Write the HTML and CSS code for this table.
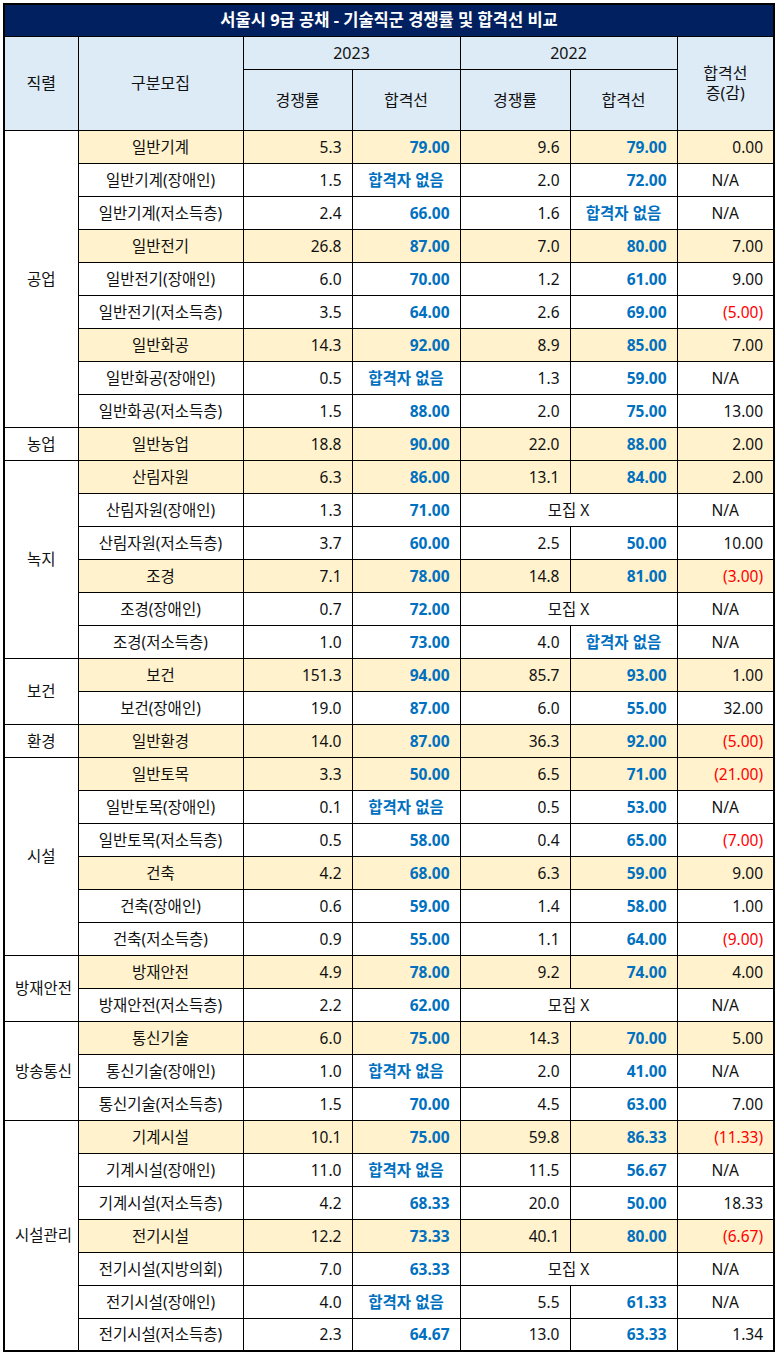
FILE: index.html
```html
<!DOCTYPE html>
<html lang="ko">
<head>
<meta charset="utf-8">
<title>서울시 9급 공채 - 기술직군 경쟁률 및 합격선 비교</title>
<link rel="stylesheet" href="styles.css">
</head>
<body>
<div class="wrap">
<table class="tbl">
<colgroup>
<col class="c1"><col class="c2"><col class="c3"><col class="c4"><col class="c5"><col class="c6"><col class="c7">
</colgroup>
<thead>
<tr class="r-title"><th colspan="7" class="title">서울시 9급 공채 - 기술직군 경쟁률 및 합격선 비교</th></tr>
<tr class="r-h1">
<th rowspan="2" class="hd">직렬</th>
<th rowspan="2" class="hd">구분모집</th>
<th colspan="2" class="hd">2023</th>
<th colspan="2" class="hd">2022</th>
<th rowspan="2" class="hd two">합격선<br>증(감)</th>
</tr>
<tr class="r-h2">
<th class="hd">경쟁률</th><th class="hd">합격선</th><th class="hd">경쟁률</th><th class="hd">합격선</th>
</tr>
</thead>
<tbody>
<tr class="hl"><td rowspan="9" class="grp">공업</td><td class="name">일반기계</td><td class="num">5.3</td><td class="pass">79.00</td><td class="num">9.6</td><td class="pass">79.00</td><td class="num">0.00</td></tr>
<tr><td class="name">일반기계(장애인)</td><td class="num">1.5</td><td class="none">합격자 없음</td><td class="num">2.0</td><td class="pass">72.00</td><td class="na">N/A</td></tr>
<tr><td class="name">일반기계(저소득층)</td><td class="num">2.4</td><td class="pass">66.00</td><td class="num">1.6</td><td class="none">합격자 없음</td><td class="na">N/A</td></tr>
<tr class="hl"><td class="name">일반전기</td><td class="num">26.8</td><td class="pass">87.00</td><td class="num">7.0</td><td class="pass">80.00</td><td class="num">7.00</td></tr>
<tr><td class="name">일반전기(장애인)</td><td class="num">6.0</td><td class="pass">70.00</td><td class="num">1.2</td><td class="pass">61.00</td><td class="num">9.00</td></tr>
<tr><td class="name">일반전기(저소득층)</td><td class="num">3.5</td><td class="pass">64.00</td><td class="num">2.6</td><td class="pass">69.00</td><td class="neg">(5.00)</td></tr>
<tr class="hl"><td class="name">일반화공</td><td class="num">14.3</td><td class="pass">92.00</td><td class="num">8.9</td><td class="pass">85.00</td><td class="num">7.00</td></tr>
<tr><td class="name">일반화공(장애인)</td><td class="num">0.5</td><td class="none">합격자 없음</td><td class="num">1.3</td><td class="pass">59.00</td><td class="na">N/A</td></tr>
<tr><td class="name">일반화공(저소득층)</td><td class="num">1.5</td><td class="pass">88.00</td><td class="num">2.0</td><td class="pass">75.00</td><td class="num">13.00</td></tr>

<tr class="hl"><td class="grp">농업</td><td class="name">일반농업</td><td class="num">18.8</td><td class="pass">90.00</td><td class="num">22.0</td><td class="pass">88.00</td><td class="num">2.00</td></tr>

<tr class="hl"><td rowspan="6" class="grp">녹지</td><td class="name">산림자원</td><td class="num">6.3</td><td class="pass">86.00</td><td class="num">13.1</td><td class="pass">84.00</td><td class="num">2.00</td></tr>
<tr><td class="name">산림자원(장애인)</td><td class="num">1.3</td><td class="pass">71.00</td><td colspan="2" class="mx">모집 X</td><td class="na">N/A</td></tr>
<tr><td class="name">산림자원(저소득층)</td><td class="num">3.7</td><td class="pass">60.00</td><td class="num">2.5</td><td class="pass">50.00</td><td class="num">10.00</td></tr>
<tr class="hl"><td class="name">조경</td><td class="num">7.1</td><td class="pass">78.00</td><td class="num">14.8</td><td class="pass">81.00</td><td class="neg">(3.00)</td></tr>
<tr><td class="name">조경(장애인)</td><td class="num">0.7</td><td class="pass">72.00</td><td colspan="2" class="mx">모집 X</td><td class="na">N/A</td></tr>
<tr><td class="name">조경(저소득층)</td><td class="num">1.0</td><td class="pass">73.00</td><td class="num">4.0</td><td class="none">합격자 없음</td><td class="na">N/A</td></tr>

<tr class="hl"><td rowspan="2" class="grp">보건</td><td class="name">보건</td><td class="num">151.3</td><td class="pass">94.00</td><td class="num">85.7</td><td class="pass">93.00</td><td class="num">1.00</td></tr>
<tr><td class="name">보건(장애인)</td><td class="num">19.0</td><td class="pass">87.00</td><td class="num">6.0</td><td class="pass">55.00</td><td class="num">32.00</td></tr>

<tr class="hl"><td class="grp">환경</td><td class="name">일반환경</td><td class="num">14.0</td><td class="pass">87.00</td><td class="num">36.3</td><td class="pass">92.00</td><td class="neg">(5.00)</td></tr>

<tr class="hl"><td rowspan="6" class="grp">시설</td><td class="name">일반토목</td><td class="num">3.3</td><td class="pass">50.00</td><td class="num">6.5</td><td class="pass">71.00</td><td class="neg">(21.00)</td></tr>
<tr><td class="name">일반토목(장애인)</td><td class="num">0.1</td><td class="none">합격자 없음</td><td class="num">0.5</td><td class="pass">53.00</td><td class="na">N/A</td></tr>
<tr><td class="name">일반토목(저소득층)</td><td class="num">0.5</td><td class="pass">58.00</td><td class="num">0.4</td><td class="pass">65.00</td><td class="neg">(7.00)</td></tr>
<tr class="hl"><td class="name">건축</td><td class="num">4.2</td><td class="pass">68.00</td><td class="num">6.3</td><td class="pass">59.00</td><td class="num">9.00</td></tr>
<tr><td class="name">건축(장애인)</td><td class="num">0.6</td><td class="pass">59.00</td><td class="num">1.4</td><td class="pass">58.00</td><td class="num">1.00</td></tr>
<tr><td class="name">건축(저소득층)</td><td class="num">0.9</td><td class="pass">55.00</td><td class="num">1.1</td><td class="pass">64.00</td><td class="neg">(9.00)</td></tr>

<tr class="hl"><td rowspan="2" class="grp">방재안전</td><td class="name">방재안전</td><td class="num">4.9</td><td class="pass">78.00</td><td class="num">9.2</td><td class="pass">74.00</td><td class="num">4.00</td></tr>
<tr><td class="name">방재안전(저소득층)</td><td class="num">2.2</td><td class="pass">62.00</td><td colspan="2" class="mx">모집 X</td><td class="na">N/A</td></tr>

<tr class="hl"><td rowspan="3" class="grp">방송통신</td><td class="name">통신기술</td><td class="num">6.0</td><td class="pass">75.00</td><td class="num">14.3</td><td class="pass">70.00</td><td class="num">5.00</td></tr>
<tr><td class="name">통신기술(장애인)</td><td class="num">1.0</td><td class="none">합격자 없음</td><td class="num">2.0</td><td class="pass">41.00</td><td class="na">N/A</td></tr>
<tr><td class="name">통신기술(저소득층)</td><td class="num">1.5</td><td class="pass">70.00</td><td class="num">4.5</td><td class="pass">63.00</td><td class="num">7.00</td></tr>

<tr class="hl"><td rowspan="7" class="grp">시설관리</td><td class="name">기계시설</td><td class="num">10.1</td><td class="pass">75.00</td><td class="num">59.8</td><td class="pass">86.33</td><td class="neg">(11.33)</td></tr>
<tr><td class="name">기계시설(장애인)</td><td class="num">11.0</td><td class="none">합격자 없음</td><td class="num">11.5</td><td class="pass">56.67</td><td class="na">N/A</td></tr>
<tr><td class="name">기계시설(저소득층)</td><td class="num">4.2</td><td class="pass">68.33</td><td class="num">20.0</td><td class="pass">50.00</td><td class="num">18.33</td></tr>
<tr class="hl"><td class="name">전기시설</td><td class="num">12.2</td><td class="pass">73.33</td><td class="num">40.1</td><td class="pass">80.00</td><td class="neg">(6.67)</td></tr>
<tr><td class="name">전기시설(지방의회)</td><td class="num">7.0</td><td class="pass">63.33</td><td colspan="2" class="mx">모집 X</td><td class="na">N/A</td></tr>
<tr><td class="name">전기시설(장애인)</td><td class="num">4.0</td><td class="none">합격자 없음</td><td class="num">5.5</td><td class="pass">61.33</td><td class="na">N/A</td></tr>
<tr><td class="name">전기시설(저소득층)</td><td class="num">2.3</td><td class="pass">64.67</td><td class="num">13.0</td><td class="pass">63.33</td><td class="num">1.34</td></tr>
</tbody>
</table>
</div>
</body>
</html>
```

FILE: styles.css
```css
html, body {
  margin: 0;
  padding: 0;
  background: #ffffff;
}

.wrap {
  padding: 3px 0 0 3px;
}

.tbl {
  border-collapse: collapse;
  table-layout: fixed;
  width: 772px;
  border: 2px solid #000;
  font-family: "Noto Sans", "Noto Sans CJK KR", sans-serif;
  font-size: 15.5px;
  color: #111;
}

.c1 { width: 74px; }
.c2 { width: 165px; }
.c3 { width: 109px; }
.c4 { width: 108px; }
.c5 { width: 110px; }
.c6 { width: 107px; }
.c7 { width: 97px; }

.tbl th,
.tbl td {
  border: 1px solid #000;
  padding: 0 10px;
  line-height: 20px;
  white-space: nowrap;
  overflow: hidden;
}

.r-title { height: 32px; }
.r-h1 { height: 33px; }
.r-h2 { height: 61px; }
.tbl tbody tr { height: 33px; }

.title {
  background: #002060;
  color: #fff;
  font-weight: 700;
  font-size: 16.5px;
  text-align: center;
}

.hd {
  background: #ddebf7;
  font-weight: 400;
  font-size: 16px;
  text-align: center;
  color: #111;
}

.two { line-height: 24px; }

.hl td { background: #fff2cc; }
.hl td.grp,
.grp {
  background: #fff;
  text-align: center;
}

.name { text-align: center; }
.num { text-align: right; }

.pass {
  text-align: right;
  color: #0070c0;
  font-weight: 700;
}

.none {
  text-align: center;
  color: #0070c0;
  font-weight: 700;
  padding: 0 4px;
}

.na { text-align: center; }
.mx { text-align: center; }

.neg {
  text-align: right;
  color: #ff0000;
}
```
